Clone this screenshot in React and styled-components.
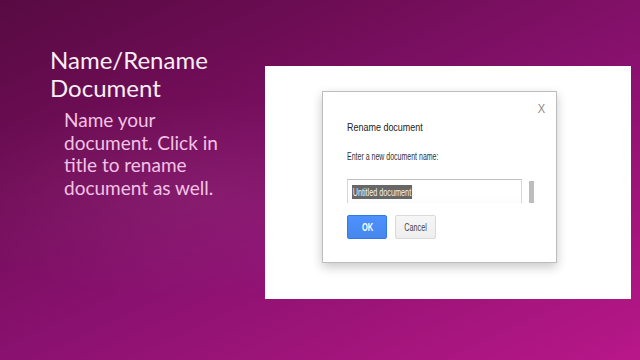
import React from "react";
import styled, { createGlobalStyle } from "styled-components";

const Global = createGlobalStyle`
  html, body { margin: 0; padding: 0; }
  body { width: 640px; height: 360px; overflow: hidden; }
`;

const Slide = styled.div`
  width: 640px;
  height: 360px;
  box-sizing: border-box;
  display: flex;
  align-items: flex-start;
  background:
    radial-gradient(ellipse 60% 40% at 30% 55%, rgba(255,255,255,0.05), rgba(255,255,255,0) 70%),
    linear-gradient(155deg, #570a42 0%, #6e0d55 25%, #8a1170 55%, #a4157c 80%, #b8178a 100%);
  font-family: Lato, "Open Sans", sans-serif;
`;

const TextColumn = styled.div`
  width: 240px;
  box-sizing: border-box;
  padding: 46px 0 0 50px;
  display: flex;
  flex-direction: column;
  gap: 7px;
`;

const Title = styled.h1`
  margin: 0;
  font-size: 24px;
  line-height: 28px;
  font-weight: 400;
  color: #f7eef5;
`;

const Body = styled.p`
  margin: 0 0 0 14px;
  font-size: 19px;
  line-height: 22.7px;
  color: #f3c2e4;
`;

const Panel = styled.div`
  margin: 66px 0 0 25px;
  width: 366px;
  height: 233px;
  background: #ffffff;
  box-sizing: border-box;
  padding: 25px 0 0 57px;
`;

const Dialog = styled.div`
  width: 235px;
  height: 172px;
  box-sizing: border-box;
  border: 1px solid #bdbdbd;
  box-shadow: 0 4px 10px rgba(0, 0, 0, 0.22);
  background: #fff;
  padding: 10px 10px 0 24px;
  display: flex;
  flex-direction: column;
  font-family: "Liberation Sans", Arial, sans-serif;
`;

const CloseRow = styled.div`
  display: flex;
  justify-content: flex-end;
  height: 14px;
  color: #8a8a8a;
  font-size: 13px;
  line-height: 14px;
`;

const Narrow = styled.span`
  display: inline-block;
  white-space: nowrap;
  transform: scaleX(${(p) => p.$sx || 0.8});
  transform-origin: ${(p) => (p.$center ? "center" : "left")} center;
`;

const Heading = styled.div`
  margin-top: 4px;
  font-size: 11.5px;
  line-height: 14px;
  color: #222;
`;

const Label = styled.div`
  margin-top: 17px;
  font-size: 10px;
  line-height: 12px;
  color: #333;
`;

const FieldRow = styled.div`
  margin-top: 16px;
  display: flex;
  align-items: flex-start;
  gap: 7px;
`;

const Field = styled.div`
  width: 175px;
  height: 24px;
  box-sizing: border-box;
  border-top: 1px solid #bfbfbf;
  border-left: 1px solid #d6d6d6;
  border-right: 1px solid #d6d6d6;
  padding: 2px 0 0 4px;
  background: linear-gradient(#fff 70%, #fbfbfb);
`;

const Selected = styled(Narrow)`
  padding: 0 1px;
  height: 14px;
  background: #676767;
  color: #f4f4f4;
  font-size: 11px;
  line-height: 14px;
`;

const ScrollThumb = styled.div`
  width: 5px;
  height: 22px;
  margin-top: 2px;
  background: #bdbdbd;
`;

const Buttons = styled.div`
  margin-top: 12px;
  display: flex;
  gap: 8px;
`;

const Button = styled.div`
  width: ${(p) => (p.$primary ? "40px" : "41px")};
  height: 24px;
  box-sizing: border-box;
  border: 1px solid ${(p) => (p.$primary ? "#3079ed" : "#d9d9d9")};
  border-radius: 2px;
  background: ${(p) => (p.$primary ? "linear-gradient(#4d90fe, #4787ed)" : "linear-gradient(#f6f6f6, #eeeeee)")};
  color: ${(p) => (p.$primary ? "#ffffff" : "#444")};
  font-size: 10px;
  font-weight: ${(p) => (p.$primary ? 700 : 400)};
  display: flex;
  align-items: center;
  justify-content: center;
`;

export default function App() {
  return (
    <>
      <Global />
      <Slide>
        <TextColumn>
          <Title>
            Name/Rename
            <br />
            Document
          </Title>
          <Body>
            Name your
            <br />
            document. Click in
            <br />
            title to rename
            <br />
            document as well.
          </Body>
        </TextColumn>
        <Panel>
          <Dialog>
            <CloseRow>
              <Narrow $sx={0.85} $center>X</Narrow>
            </CloseRow>
            <Heading>
              <Narrow $sx={0.78}>Rename document</Narrow>
            </Heading>
            <Label>
              <Narrow $sx={0.7}>Enter a new document name:</Narrow>
            </Label>
            <FieldRow>
              <Field>
                <Selected $sx={0.66}>Untitled document</Selected>
              </Field>
              <ScrollThumb />
            </FieldRow>
            <Buttons>
              <Button $primary>
                <Narrow $sx={0.75} $center>OK</Narrow>
              </Button>
              <Button>
                <Narrow $sx={0.72} $center>Cancel</Narrow>
              </Button>
            </Buttons>
          </Dialog>
        </Panel>
      </Slide>
    </>
  );
}
